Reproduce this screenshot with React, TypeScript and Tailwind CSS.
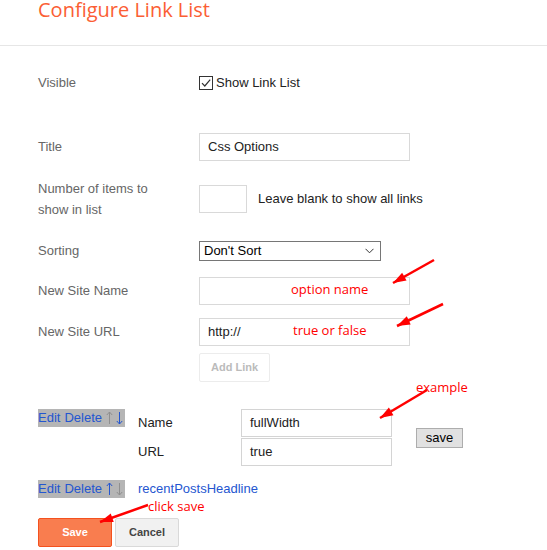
import React from "react";

type Arrow = { x1: number; y1: number; x2: number; y2: number };

const arrows: Arrow[] = [
  { x1: 434, y1: 260, x2: 393, y2: 283 },
  { x1: 443, y1: 304, x2: 397, y2: 326 },
  { x1: 427, y1: 390, x2: 380, y2: 418 },
  { x1: 148, y1: 505, x2: 100, y2: 522 },
];

// arrowhead triangle at the tip
function headPoints(a: Arrow) {
  const dx = a.x2 - a.x1;
  const dy = a.y2 - a.y1;
  const len = Math.sqrt(dx * dx + dy * dy);
  const ux = dx / len;
  const uy = dy / len;
  const bx = a.x2 - ux * 13;
  const by = a.y2 - uy * 13;
  const px = -uy * 4.5;
  const py = ux * 4.5;
  return `${a.x2},${a.y2} ${bx + px},${by + py} ${bx - px},${by - py}`;
}

function Label({ children }: { children: React.ReactNode }) {
  return <div className="w-[161px] shrink-0 text-[13px] text-[#666]">{children}</div>;
}

// thin arrow glyph drawn as svg so it fits the gray strip
function ArrowGlyph({ up, on }: { up: boolean; on: boolean }) {
  const c = on ? "#2456d0" : "#8f8f8f";
  return (
    <svg width="7" height="14" viewBox="0 0 7 14" className="shrink-0">
      {up ? (
        <path d="M3.5 1 V13 M0.8 4 L3.5 1 L6.2 4" fill="none" stroke={c} strokeWidth="1" />
      ) : (
        <path d="M3.5 1 V13 M0.8 10 L3.5 13 L6.2 10" fill="none" stroke={c} strokeWidth="1" />
      )}
    </svg>
  );
}

function EditLinks({ upOn, downOn }: { upOn: boolean; downOn: boolean }) {
  return (
    <span className="inline-flex h-[18px] w-[87px] shrink-0 items-center overflow-hidden bg-[#b5b5b5] text-[13px] leading-[18px] text-[#2456d0]">
      <span>Edit</span>
      <span className="ml-[4px]">Delete</span>
      <span className="ml-[4px] flex">
        <ArrowGlyph up={true} on={upOn} />
      </span>
      <span className="ml-[3px] flex">
        <ArrowGlyph up={false} on={downOn} />
      </span>
    </span>
  );
}

export default function App() {
  return (
    <div className="relative h-[550px] w-[547px] overflow-hidden bg-white font-['Liberation_Sans',Arial,sans-serif]">
      <h1 className="pl-[38px] font-['Open_Sans',sans-serif] text-[20px] leading-[20px] text-[#fb5e34]">
        Configure Link List
      </h1>
      <div className="mt-[25px] border-t border-[#e6e6e6]" />

      <div className="pl-[38px]">
        {/* Visible */}
        <div className="mt-[23px] flex h-[28px] items-center">
          <Label>Visible</Label>
          <span className="flex h-[14px] w-[14px] items-center justify-center border border-[#333] bg-white">
            <svg width="12" height="12" viewBox="0 0 12 12">
              <path d="M2 6.2 L4.8 9 L10.2 2.6" fill="none" stroke="#333" strokeWidth="1.2" />
            </svg>
          </span>
          <span className="ml-[3px] text-[13px] text-[#222]">Show Link List</span>
        </div>

        {/* Title */}
        <div className="mt-[36px] flex h-[28px] items-center">
          <Label>Title</Label>
          <div className="flex h-[28px] w-[211px] items-center border border-[#d9d9d9] px-[8px] text-[13px] text-[#222]">
            Css Options
          </div>
        </div>

        {/* Number of items */}
        <div className="mt-[17px] flex h-[42px] items-center">
          <div className="w-[161px] shrink-0 text-[13px] leading-[21px] text-[#666]">
            Number of items to
            <br />
            show in list
          </div>
          <div className="h-[28px] w-[48px] border border-[#d9d9d9]" />
          <span className="ml-[11px] text-[13px] text-[#222]">Leave blank to show all links</span>
        </div>

        {/* Sorting */}
        <div className="mt-[17px] flex h-[28px] items-center">
          <Label>Sorting</Label>
          <div className="flex h-[20px] w-[182px] items-center justify-between border border-[#767676] pl-[4px] pr-[6px] text-[13px] text-black">
            <span>Don't Sort</span>
            <svg width="9" height="6" viewBox="0 0 9 6">
              <path d="M0.5 0.8 L4.5 4.8 L8.5 0.8" fill="none" stroke="#333" strokeWidth="1" />
            </svg>
          </div>
        </div>

        {/* New Site Name */}
        <div className="mt-[12px] flex h-[28px] items-center">
          <Label>New Site Name</Label>
          <div className="h-[28px] w-[211px] border border-[#d9d9d9]" />
        </div>

        {/* New Site URL */}
        <div className="mt-[13px] flex h-[28px] items-center">
          <Label>New Site URL</Label>
          <div className="flex h-[28px] w-[211px] items-center border border-[#d9d9d9] px-[8px] text-[13px] text-[#222]">
            http://
          </div>
        </div>

        {/* Add Link */}
        <div className="mt-[7px] flex">
          <div className="w-[161px] shrink-0" />
          <button className="h-[29px] w-[71px] rounded-[2px] border border-[#ececec] bg-white text-[11px] font-bold text-[#bbb]">
            Add Link
          </button>
        </div>

        {/* Link being edited */}
        <div className="mt-[27px] flex items-start">
          <EditLinks upOn={false} downOn={true} />
          <div className="ml-[13px] flex flex-col">
            <div className="flex h-[28px] items-center">
              <span className="w-[103px] text-[13px] text-[#222]">Name</span>
              <div className="flex h-[28px] w-[151px] items-center border border-[#d4d4d4] px-[8px] text-[13px] text-[#222]">
                fullWidth
              </div>
            </div>
            <div className="mt-[1px] flex h-[28px] items-center">
              <span className="w-[103px] text-[13px] text-[#222]">URL</span>
              <div className="flex h-[28px] w-[151px] items-center border border-[#d4d4d4] px-[8px] text-[13px] text-[#222]">
                true
              </div>
            </div>
          </div>
          <button className="ml-[24px] mt-[19px] h-[20px] w-[47px] border border-[#adadad] bg-[#e1e1e1] text-[13px] leading-[18px] text-black">
            save
          </button>
        </div>

        {/* Saved link */}
        <div className="mt-[13px] flex items-center">
          <EditLinks upOn={true} downOn={false} />
          <span className="ml-[13px] text-[13px] text-[#2456d0]">recentPostsHeadline</span>
        </div>

        {/* Actions */}
        <div className="mt-[19px] flex gap-[3px]">
          <button className="h-[29px] w-[74px] rounded-[2px] border border-[#f4511e] bg-[#f97d4f] text-[11px] font-bold text-white">
            Save
          </button>
          <button className="h-[29px] w-[64px] rounded-[2px] border border-[#d9d9d9] bg-[#f1f1f1] text-[11px] font-bold text-[#444]">
            Cancel
          </button>
        </div>
      </div>

      {/* annotations */}
      <span className="absolute left-[291px] top-[280px] font-['Open_Sans',sans-serif] text-[13px] leading-[18px] text-[#f00]">
        option name
      </span>
      <span className="absolute left-[293px] top-[321px] font-['Open_Sans',sans-serif] text-[13px] leading-[18px] text-[#f00]">
        true or false
      </span>
      <span className="absolute left-[416px] top-[378px] font-['Open_Sans',sans-serif] text-[13px] leading-[18px] text-[#f00]">
        example
      </span>
      <span className="absolute left-[148px] top-[497px] font-['Open_Sans',sans-serif] text-[13px] leading-[18px] text-[#f00]">
        click save
      </span>
      <svg className="pointer-events-none absolute left-0 top-0" width="547" height="550">
        {arrows.map((a, i) => (
          <g key={i}>
            <line x1={a.x1} y1={a.y1} x2={a.x2} y2={a.y2} stroke="#f00" strokeWidth="2.5" />
            <polygon points={headPoints(a)} fill="#f00" />
          </g>
        ))}
      </svg>
    </div>
  );
}
